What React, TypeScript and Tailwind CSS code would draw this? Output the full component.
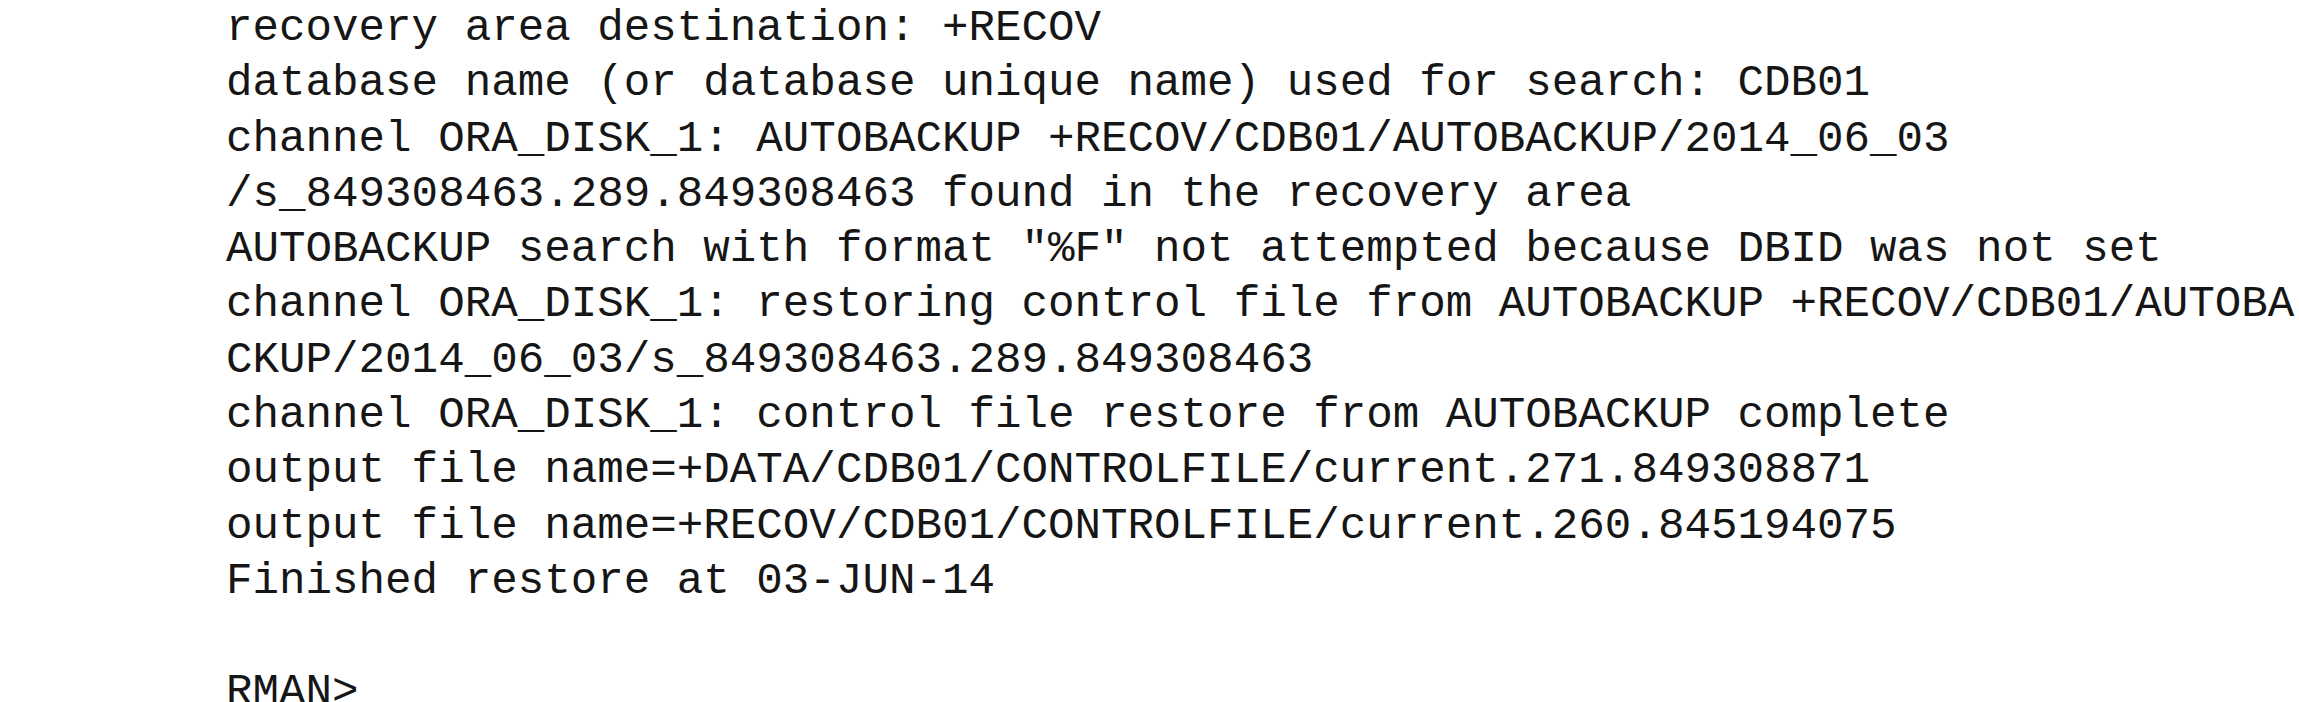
const lines = [
  "recovery area destination: +RECOV",
  "database name (or database unique name) used for search: CDB01",
  "channel ORA_DISK_1: AUTOBACKUP +RECOV/CDB01/AUTOBACKUP/2014_06_03",
  "/s_849308463.289.849308463 found in the recovery area",
  'AUTOBACKUP search with format "%F" not attempted because DBID was not set',
  "channel ORA_DISK_1: restoring control file from AUTOBACKUP +RECOV/CDB01/AUTOBA",
  "CKUP/2014_06_03/s_849308463.289.849308463",
  "channel ORA_DISK_1: control file restore from AUTOBACKUP complete",
  "output file name=+DATA/CDB01/CONTROLFILE/current.271.849308871",
  "output file name=+RECOV/CDB01/CONTROLFILE/current.260.845194075",
  "Finished restore at 03-JUN-14",
  "",
  "RMAN>",
];

const App = () => {
  return (
    <div className="w-[2299px] h-[702px] overflow-hidden bg-white">
      <pre className="mt-[1px] pl-[226px] font-['Courier_New','Liberation_Mono',monospace] text-[44.2px] leading-[55.3px] text-[#161616] whitespace-pre">
        {lines.map((line, i) => (
          <div key={i} className="h-[55.3px]">
            {line}
          </div>
        ))}
      </pre>
    </div>
  );
};

export default App;
